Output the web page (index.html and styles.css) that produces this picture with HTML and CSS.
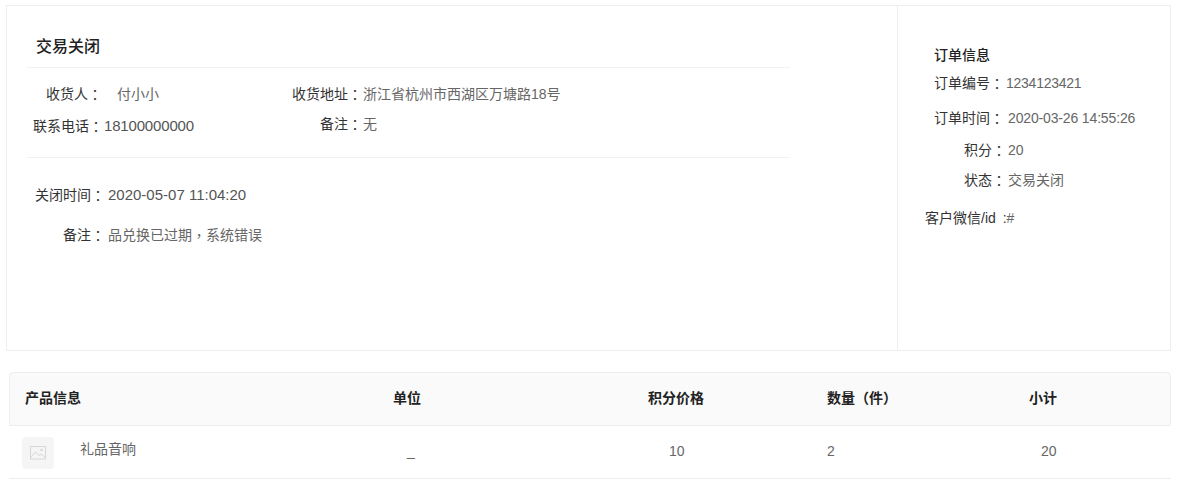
FILE: index.html
```html
<!DOCTYPE html>
<html lang="zh-CN">
<head>
<meta charset="utf-8">
<title>订单详情</title>
<link rel="stylesheet" href="styles.css">
</head>
<body>
<section class="card">
  <div class="main">
    <h2 class="title">交易关闭</h2>
    <div class="receiver">
      <div class="col col-a">
        <p class="row r1"><span class="lab">收货人<span class="p" lang="zh-TW">：</span></span><span class="val gap">付小小</span></p>
        <p class="row r2"><span class="lab">联系电话<span class="p" lang="zh-TW">：</span></span><span class="val phone">18100000000</span></p>
      </div>
      <div class="col col-b">
        <p class="row r1"><span class="lab">收货地址<span class="p" lang="zh-TW">：</span></span><span class="val">浙江省杭州市西湖区万塘路18号</span></p>
        <p class="row r3"><span class="lab">备注<span class="p" lang="zh-TW">：</span></span><span class="val">无</span></p>
      </div>
    </div>
    <div class="close">
      <p class="crow"><span class="lab">关闭时间<span class="p" lang="zh-TW">：</span></span><span class="val date">2020-05-07 11:04:20</span></p>
      <p class="crow"><span class="lab">备注<span class="p" lang="zh-TW">：</span></span><span class="val">品兑换已过期<span class="p" lang="zh-TW">，</span>系统错误</span></p>
    </div>
  </div>
  <aside class="side">
    <h3 class="side-title">订单信息</h3>
    <p class="srow s1"><span class="slab">订单编号<span class="p" lang="zh-TW">：</span></span><span class="val no">1234123421</span></p>
    <p class="srow s2"><span class="slab">订单时间<span class="p" lang="zh-TW">：</span></span><span class="val num">2020-03-26 14:55:26</span></p>
    <p class="srow s3"><span class="slab">积分<span class="p" lang="zh-TW">：</span></span><span class="val num">20</span></p>
    <p class="srow s4"><span class="slab">状态<span class="p" lang="zh-TW">：</span></span><span class="val">交易关闭</span></p>
    <p class="wx"><span class="lab">客户微信/id :</span><span class="val">#</span></p>
  </aside>
</section>
<section class="table">
  <div class="thead">
    <div class="c1">产品信息</div>
    <div class="c2">单位</div>
    <div class="c3">积分价格</div>
    <div class="c4">数量（件）</div>
    <div class="c5">小计</div>
  </div>
  <div class="tbody">
    <div class="c1 product">
      <span class="thumb">
        <svg width="16" height="14" viewBox="0 0 16 14" aria-hidden="true">
          <rect x="0.5" y="0.5" width="15" height="12.5" fill="none" stroke="#d8d8d8"/>
          <path d="M1 11l4.500-5 3.500 3.500 2-1.500 4 3" fill="none" stroke="#d8d8d8"/>
          <circle cx="11.500" cy="4" r="1.300" fill="#d8d8d8"/>
        </svg>
      </span>
      <span class="pname">礼品音响</span>
    </div>
    <div class="c2 unit">_</div>
    <div class="c3 qty">10</div>
    <div class="c4 count">2</div>
    <div class="c5 sub">20</div>
  </div>
</section>
</body>
</html>
```
FILE: styles.css
```css
* { box-sizing: border-box; }
html, body { margin: 0; padding: 0; background: #fff; }
body {
  font-family: "Liberation Sans", "Noto Sans CJK SC", sans-serif;
  font-size: 14px;
  color: #333;
  height: 498px;
  overflow: hidden;
  padding: 5px 26px 0 6px;
}
p, h2, h3 { margin: 0; }
.p { font-family: "Noto Sans CJK TC", sans-serif; line-height: 0; vertical-align: -1px; }
.card {
  display: flex;
  width: 1165px;
  height: 346px;
  border: 1px solid #eee;
}
.main { width: 891px; border-right: 1px solid #eee; padding: 0 0 0 20px; }
.title {
  width: 763px;
  height: 62px;
  padding: 30px 0 0 9px;
  font-size: 16px;
  line-height: 22px;
  font-weight: 500;
  color: #222;
  border-bottom: 1px solid #f2f2f2;
}
.receiver {
  display: flex;
  width: 763px;
  height: 90px;
  border-bottom: 1px solid #f2f2f2;
}
.col-a { width: 259px; padding-top: 16px; }
.row { line-height: 20px; white-space: nowrap; }
.col-a .lab { display: inline-block; text-align: right; }
.col-a .r1 .lab { width: 75px; }
.col-a .r2 .lab { width: 76px; margin-right: 1px; }
.col-b { padding-top: 16px; }
.col-b .lab { display: inline-block; width: 76px; text-align: right; margin-right: 1px; }
.r2 { margin-top: 12px; }
.r3 { margin-top: 10px; }
.val { color: #666; }
.gap { margin-left: 15px; }
.phone { font-size: 15px; letter-spacing: -0.170px; color: #555; }
.close { padding-top: 27px; }
.crow { line-height: 20px; margin-bottom: 20px; white-space: nowrap; }
.crow .lab { display: inline-block; width: 78px; margin-right: 3px; text-align: right; }
.date { font-size: 15px; color: #555; }
.side { flex: 1; padding: 39px 0 0 26px; }
.side-title { font-size: 14px; line-height: 20px; font-weight: 500; color: #222; margin-left: 10px; }
.srow { line-height: 20px; white-space: nowrap; }
.srow .slab { display: inline-block; text-align: right; }
.s1 .slab { width: 80px; margin-right: 2px; }
.s2 .slab { width: 80px; margin-right: 4px; }
.s3 .slab, .s4 .slab { width: 82px; margin-right: 2px; }
.s1 { margin-top: 8px; }
.s2 { margin-top: 15px; }
.s3 { margin-top: 12px; }
.s4 { margin-top: 10px; }
.no { letter-spacing: -0.250px; }
.num { letter-spacing: -0.150px; }
.wx { margin-top: 18px; line-height: 20px; padding-left: 1px; white-space: nowrap; word-spacing: 3px; }
.table {
  width: 1162px;
  margin: 21px 0 0 3px;
}
.thead, .tbody {
  display: grid;
  align-items: center;
}
.thead {
  grid-template-columns: 383px 255px 179px 202px 1fr;
  height: 54px;
  padding-bottom: 4px;
  background: #fafafa;
  border: 1px solid #eee;
  border-radius: 4px 4px 0 0;
  font-weight: 700;
  color: #222;
  font-size: 14px;
}
.thead .c1 { padding-left: 15px; }
.tbody {
  grid-template-columns: 398px 262px 158px 214px 1fr;
  height: 53px;
  border-bottom: 1px solid #eee;
  color: #666;
}
.product { display: flex; align-items: center; padding-left: 13px; }
.thumb {
  display: flex;
  align-items: center;
  justify-content: center;
  width: 32px;
  height: 32px;
  margin-top: 2px;
  background: #f5f5f5;
  border-radius: 4px;
}
.pname { margin-left: 26px; margin-top: -9px; }
.unit, .qty, .count, .sub { padding-bottom: 2px; }
```
